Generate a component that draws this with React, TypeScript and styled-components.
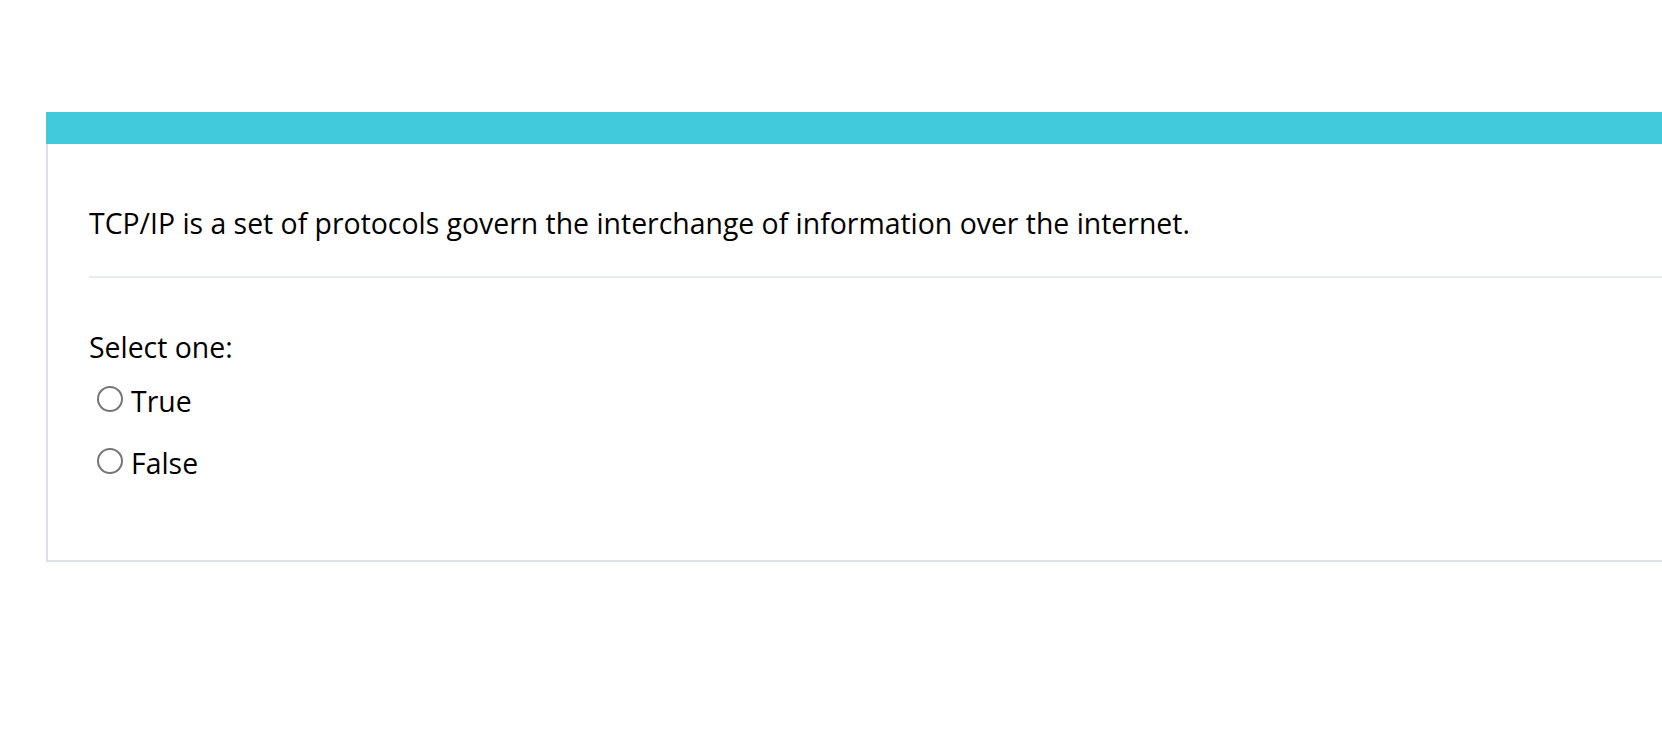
import React from 'react';
import styled, { createGlobalStyle } from 'styled-components';

const GlobalStyle = createGlobalStyle`
  html, body {
    margin: 0;
    padding: 0;
    background: #ffffff;
    overflow: hidden;
  }
  body {
    font-family: "Open Sans", "Noto Sans", sans-serif;
    color: #000000;
  }
`;

const Page = styled.div`
  width: 1662px;
  height: 732px;
  padding: 112px 0 0 46px;
  box-sizing: border-box;
  overflow: hidden;
`;

const Card = styled.div`
  width: 1700px;
`;

const CardHeader = styled.div`
  height: 32px;
  background: #40cadb;
`;

const CardBody = styled.div`
  border: 2px solid #dee2e6;
  border-top: none;
  height: 418px;
  box-sizing: border-box;
  padding: 59px 0 0 41px;
`;

const Question = styled.p`
  margin: 0;
  font-size: 28.4px;
  line-height: 40px;
`;

const Divider = styled.hr`
  border: none;
  border-top: 2px solid #e9ecef;
  margin: 33px 0 0 0;
`;

const Prompt = styled.div`
  margin-top: 49px;
  font-size: 28.4px;
  line-height: 40px;
`;

const Options = styled.div`
  display: flex;
  flex-direction: column;
  gap: 22px;
  margin-top: 14px;
  padding-left: 8px;
`;

const Option = styled.label`
  display: flex;
  align-items: center;
  gap: 8px;
  font-size: 28.4px;
  line-height: 40px;
  cursor: pointer;
`;

const Radio = styled.input.attrs({ type: 'radio' })`
  appearance: none;
  margin: 0 0 5px 0;
  width: 26px;
  height: 26px;
  border: 2px solid #767676;
  border-radius: 50%;
  box-sizing: border-box;
  background: #fff;
  &:checked {
    border-color: #0075ff;
    box-shadow: inset 0 0 0 4px #fff;
    background: #0075ff;
  }
`;

export default function App() {
  return (
    <>
      <GlobalStyle />
      <Page>
        <Card>
          <CardHeader />
          <CardBody>
            <Question>
              TCP/IP is a set of protocols govern the interchange of information over the internet.
            </Question>
            <Divider />
            <Prompt>Select one:</Prompt>
            <Options>
              <Option>
                <Radio name="answer" value="true" />
                True
              </Option>
              <Option>
                <Radio name="answer" value="false" />
                False
              </Option>
            </Options>
          </CardBody>
        </Card>
      </Page>
    </>
  );
}
